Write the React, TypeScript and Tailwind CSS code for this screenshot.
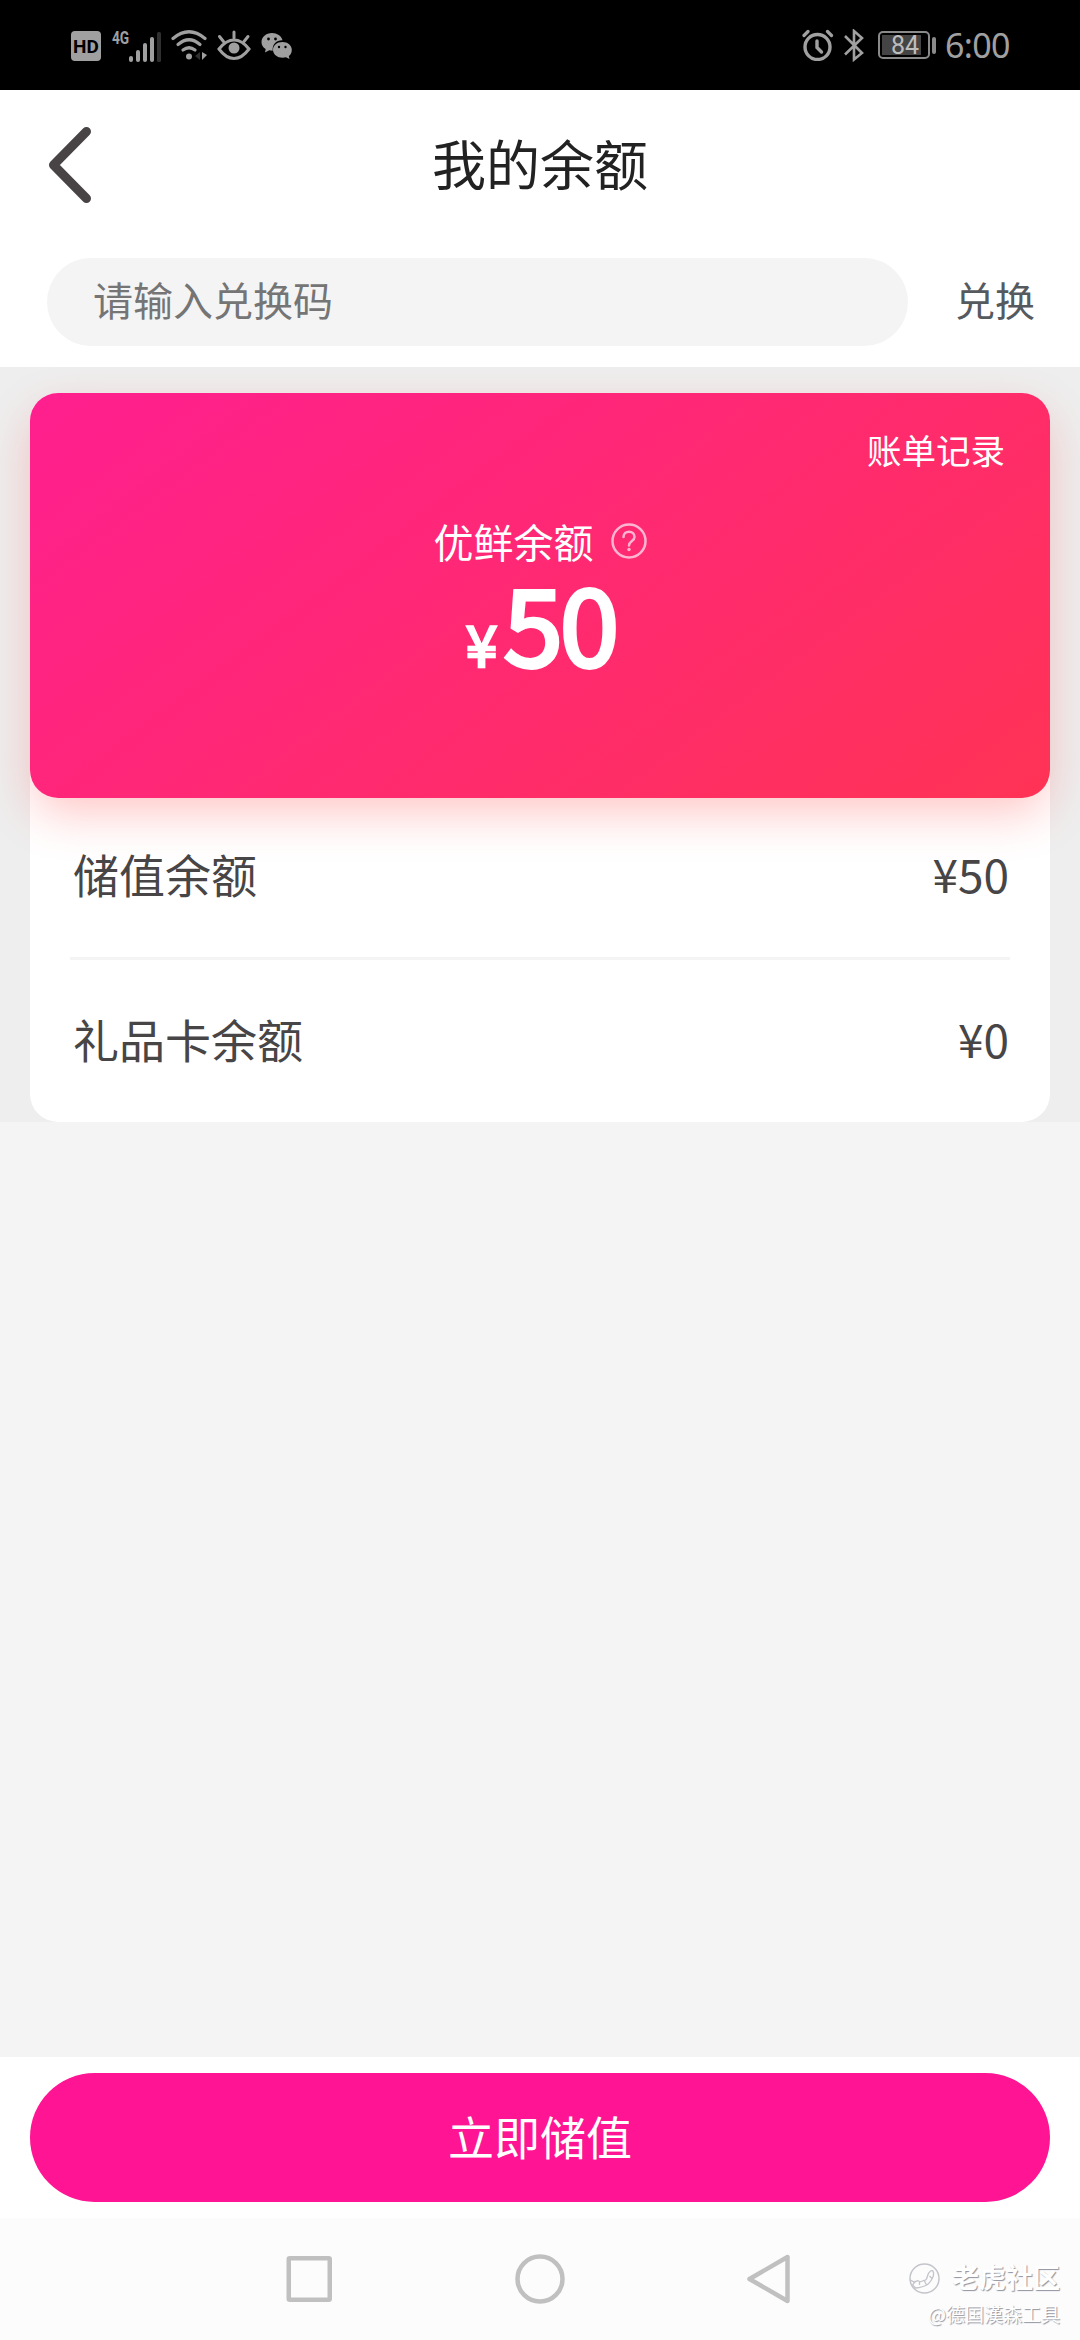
const balances = [
    { label: "储值余额", value: "¥50" },
    { label: "礼品卡余额", value: "¥0" },
];

function StatusBar() {
    return (
        <div className="flex h-[90px] items-center bg-black pl-[71px] pr-[70px] text-[#a0a0a0]">
            {/* HD badge */}
            <div className="mt-0.5 flex size-[30px] items-center justify-center rounded-[4px] bg-[#a0a0a0] font-['Roboto',sans-serif] text-[19px] font-bold leading-none text-black">
                HD
            </div>

            {/* Signal */}
            <div className="ml-[11px] flex h-[31px] items-start">
                <span className="font-['Roboto',sans-serif] text-[19px] leading-[15px] font-bold">
                    <span className="inline-block w-[17px] origin-left scale-x-[0.72]">4G</span>
                </span>
                <svg width="33" height="31" viewBox="0 0 33 31" className="mt-0.5">
                    <rect x="0" y="24" width="4" height="6" rx="2" fill="#a0a0a0" />
                    <rect x="7" y="18" width="4" height="12" rx="2" fill="#a0a0a0" />
                    <rect x="14" y="11" width="4" height="19" rx="2" fill="#a0a0a0" />
                    <rect x="21" y="5" width="4" height="25" rx="2" fill="#a0a0a0" />
                    <rect x="28" y="0" width="4" height="30" rx="1.5" fill="#303030" />
                </svg>
            </div>

            {/* Wifi */}
            <svg width="37" height="31" viewBox="0 0 37 31" className="ml-[9px]" fill="none" stroke="#a0a0a0" strokeWidth="3.2" strokeLinecap="round">
                <path d="M2 8.5 Q18 -5 34 8.5" />
                <path d="M7 14.5 Q18 5 29 14.5" />
                <path d="M12 20 Q18 15.5 24 20" />
                <circle cx="18" cy="26.5" r="3" fill="#a0a0a0" stroke="none" />
                <path d="M29 22v8l-5-4z" fill="#303030" stroke="none" />
                <path d="M31 22v8l5-5z" fill="#a0a0a0" stroke="none" />
            </svg>

            {/* Eye comfort */}
            <svg width="34" height="31" viewBox="0 0 34 31" className="ml-[9px]" fill="none" stroke="#a0a0a0" strokeWidth="3" strokeLinecap="round">
                <path d="M2 19 Q9 10 17 10 T32 19 Q25 28.5 17 28.5 T2 19Z" />
                <circle cx="17" cy="18" r="5.5" fill="#a0a0a0" stroke="none" />
                <path d="M17 2v6M2.5 6.5l4 5M31 6.5l-4 5" />
            </svg>

            {/* WeChat */}
            <svg width="31" height="29" viewBox="0 0 31 29" className="ml-[10px]" fill="#a0a0a0">
                <path d="M11 2C5 2 .5 6 .5 11c0 3 1.5 5.5 4.2 7L4 21.5l4.2-2.2 3.5.5C11 13 16 9 21.5 9.3 20.5 5 16 2 11 2z" />
                <path d="M21.5 11C16 11 12 14.5 12 19s4.5 7.7 9.5 7.7l3.5-.5 3.5 1.9-.7-3c1.900-1.500 3-3.500 3-6.100 0-4.500-4-8-9.300-8z" />
                <g fill="#000">
                    <circle cx="7.5" cy="8" r="1.4" />
                    <circle cx="14.5" cy="8" r="1.4" />
                    <circle cx="18" cy="16" r="1.2" />
                    <circle cx="24.5" cy="16" r="1.2" />
                </g>
            </svg>

            <div className="ml-auto flex items-center">
                {/* Alarm */}
                <svg width="32" height="32" viewBox="0 0 32 32" fill="none" stroke="#a0a0a0" strokeWidth="3.4" strokeLinecap="round">
                    <circle cx="15.5" cy="18" r="12.5" />
                    <path d="M15 12v6.5l4.5 4.5" />
                    <path d="M2 6.5l4-4M29.5 6.5l-4-4" strokeWidth="3.2" />
                </svg>
                {/* Bluetooth */}
                <svg width="22" height="33" viewBox="0 0 22 33" className="ml-[9px]" fill="none" stroke="#a0a0a0" strokeWidth="2.6">
                    <path d="M2 7l17 17-8 6.5V2l8 7L2 25.5" />
                </svg>
                {/* Battery */}
                <div className="ml-[13px] flex h-[28px] w-[52px] items-center rounded-[5px] border-2 border-[#8a8a8a] p-[2px]">
                    <div className="flex h-full w-[39px] items-center justify-end bg-[#444] pr-[2px] font-['Roboto',sans-serif] text-[25px] leading-none text-[#bdbdbd]">
                        84
                    </div>
                </div>
                <div className="ml-[2px] h-[17px] w-[4px] rounded-[2px] bg-[#8a8a8a]" />
                <span className="ml-[9px] w-[65px] font-['Noto_Sans',sans-serif] text-[34px] leading-none tracking-[-0.7px]">6:00</span>
            </div>
        </div>
    );
}

function Header() {
    return (
        <header className="bg-white">
            <div className="grid h-[151px] grid-cols-[1fr_auto_1fr] items-center">
                <svg width="44" height="78" viewBox="0 0 44 78" className="-mt-0.5 ml-[48px]" fill="none" stroke="#484446" strokeWidth="9" strokeLinecap="round" strokeLinejoin="round">
                    <path d="M38.5 5.5L5.5 39l33 33.5" />
                </svg>
                <h1 className="pb-[5px] text-[54px] leading-none text-[#222]">我的余额</h1>
            </div>
            <div className="flex h-[126px] items-center pb-[4px] pl-[47px] pr-[45px]">
                <div className="flex h-[88px] w-[861px] items-center rounded-full bg-[#f4f4f4] pb-[6px] pl-[46px] text-[40px] leading-none text-[#757575]">
                    请输入兑换码
                </div>
                <button className="ml-auto pb-[6px] text-[40px] leading-none text-[#555a5f]">兑换</button>
            </div>
        </header>
    );
}

function BalanceCard() {
    return (
        <section className="relative flex h-[405px] flex-col rounded-[28px] bg-linear-[143deg,#ff1f8f,#ff3355] px-[45px] text-white shadow-[0_18px_48px_-4px_rgba(255,60,60,0.3)]">
            <div className="mt-[39px] self-end text-[34.5px] leading-[35px]">账单记录</div>
            <div className="mt-[54px] flex items-center justify-center gap-[17px] text-[40px] leading-[40px]">
                <span>优鲜余额</span>
                <svg width="36" height="36" viewBox="0 0 36 36" fill="none" stroke="#ffb5d2" strokeWidth="2.5" strokeLinecap="round">
                    <circle cx="18" cy="18" r="16.5" />
                    <path d="M12.5 14c0-7 11-7 11 0 0 4-5.5 4-5.5 8.5" />
                    <circle cx="18" cy="26.5" r="1.7" fill="#ffb5d2" stroke="none" />
                </svg>
            </div>
            <div className="mt-[20px] flex items-baseline justify-center pl-[2px] leading-[80px]">
                <span className="text-[57px] [-webkit-text-stroke:2.5px_white]">¥</span>
                <span className="ml-[6px] text-[107px] tracking-[-3px] [-webkit-text-stroke:4px_white]">50</span>
            </div>
        </section>
    );
}

export default function App() {
    return (
        <div className="flex h-[2340px] w-[1080px] flex-col overflow-hidden bg-[#f4f4f4] font-['Noto_Sans_CJK_SC',sans-serif]">
            <StatusBar />
            <Header />

            <main className="flex-1">
                <div className="h-[755px] overflow-hidden bg-[#eee] px-[30px] pt-[26px]">
                    <div className="rounded-[28px] bg-white">
                        <BalanceCard />
                        <div className="relative px-[40px]">
                            {balances.map((item, idx) => (
                                <div
                                    key={idx}
                                    className={`flex items-center justify-between pl-[3px] pr-px text-[46px] leading-none text-[#484546] ${idx > 0 ? "h-[165px] border-t-[3px] border-[#f4f4f4] pb-[6px]" : "h-[159px] pb-[9px]"}`}
                                >
                                    <span>{item.label}</span>
                                    <span>{item.value}</span>
                                </div>
                            ))}
                        </div>
                    </div>
                </div>
            </main>

            {/* Recharge */}
            <div className="h-[161px] bg-white px-[30px] pt-[16px]">
                <button className="flex h-[129px] w-full items-center justify-center rounded-full bg-[#ff1493] pb-[6px] text-[46px] leading-none text-white">
                    立即储值
                </button>
            </div>

            {/* System navigation */}
            <nav className="flex h-[122px] bg-[#fcfcfc] pl-[286px] pr-[20px] pt-[36px]">
                <svg width="504" height="50" viewBox="0 0 504 50" fill="none" stroke="#c0c0c0" strokeWidth="4.5" strokeLinejoin="round">
                    <rect x="2.75" y="4.25" width="41" height="41.5" rx="1" />
                    <circle cx="254" cy="25" r="22.5" />
                    <path d="M501.5 3v44L463.5 25z" />
                </svg>
                <div className="ml-auto flex flex-col items-end pt-[9px] text-white [text-shadow:1px_1px_1px_#8f939e]">
                    <div className="flex items-center gap-[12px]">
                        <svg width="31" height="31" viewBox="0 0 31 31" fill="none" stroke="#c3c5cb" strokeWidth="1.5">
                            <circle cx="15.5" cy="15.5" r="14.5" />
                            <path d="M1.5 17c2 1 2 2 4 2s2-2 4-1 2 1 4 0 3 0 4-2 1-6 4-8 4 3 2 7-5 7-8 8-5 2-9 2l-3-3 3-4m4 1v3m5-4l2 4m3-9l3 3" strokeWidth="1.3" />
                        </svg>
                        <span className="pb-[4px] text-[27px] font-bold leading-[27px]">老虎社区</span>
                    </div>
                    <span className="mt-[10px] text-[19px] leading-[20px]">@德国漢森工具</span>
                </div>
            </nav>
        </div>
    );
}
